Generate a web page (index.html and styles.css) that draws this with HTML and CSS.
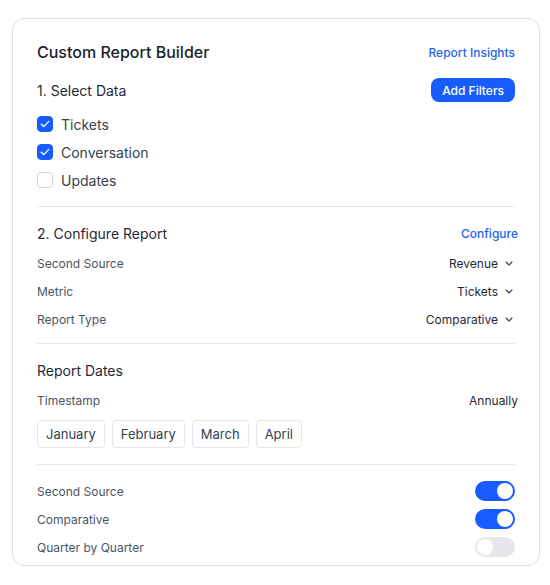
FILE: index.html
```html
<!DOCTYPE html>
<html lang="en">
<head>
<meta charset="utf-8">
<title>Custom Report Builder</title>
<link rel="stylesheet" href="styles.css">
</head>
<body>
<div class="card">
  <div class="row title-row">
    <h1 class="title">Custom Report Builder</h1>
    <a class="link">Report Insights</a>
  </div>

  <div class="row head">
    <h2 class="section-title">1. Select Data</h2>
    <button class="btn">Add Filters</button>
  </div>
  <div class="check-list">
    <label class="check-row"><span class="box checked"><svg width="10" height="8" viewBox="0 0 10 8"><path d="M1.2 4.2 L3.8 6.6 L8.8 1.4" fill="none" stroke="#fff" stroke-width="1.3" stroke-linecap="round" stroke-linejoin="round"/></svg></span>Tickets</label>
    <label class="check-row"><span class="box checked"><svg width="10" height="8" viewBox="0 0 10 8"><path d="M1.2 4.2 L3.8 6.6 L8.8 1.4" fill="none" stroke="#fff" stroke-width="1.3" stroke-linecap="round" stroke-linejoin="round"/></svg></span>Conversation</label>
    <label class="check-row"><span class="box"></span>Updates</label>
  </div>

  <div class="section s2">
    <div class="row head">
      <h2 class="section-title">2. Configure Report</h2>
      <a class="link link-over">Configure</a>
    </div>
    <div class="rows">
      <div class="row item"><span class="label">Second Source</span><span class="select">Revenue<svg class="chev" width="8" height="5" viewBox="0 0 8 5"><path d="M1 1 L4 4 L7 1" fill="none" stroke="#374151" stroke-width="1.1" stroke-linecap="round" stroke-linejoin="round"/></svg></span></div>
      <div class="row item"><span class="label">Metric</span><span class="select">Tickets<svg class="chev" width="8" height="5" viewBox="0 0 8 5"><path d="M1 1 L4 4 L7 1" fill="none" stroke="#374151" stroke-width="1.1" stroke-linecap="round" stroke-linejoin="round"/></svg></span></div>
      <div class="row item"><span class="label">Report Type</span><span class="select">Comparative<svg class="chev" width="8" height="5" viewBox="0 0 8 5"><path d="M1 1 L4 4 L7 1" fill="none" stroke="#374151" stroke-width="1.1" stroke-linecap="round" stroke-linejoin="round"/></svg></span></div>
    </div>
  </div>

  <div class="section s3">
    <div class="row head">
      <h2 class="section-title">Report Dates</h2>
    </div>
    <div class="row item ts"><span class="label">Timestamp</span><span class="value">Annually</span></div>
    <div class="months">
      <button class="month">January</button>
      <button class="month">February</button>
      <button class="month">March</button>
      <button class="month">April</button>
    </div>
  </div>

  <div class="section s4">
    <div class="row item"><span class="label">Second Source</span><span class="toggle on"><span class="knob"></span></span></div>
    <div class="row item"><span class="label">Comparative</span><span class="toggle on"><span class="knob"></span></span></div>
    <div class="row item"><span class="label">Quarter by Quarter</span><span class="toggle"><span class="knob"></span></span></div>
  </div>
</div>
</body>
</html>
```

FILE: styles.css
```css
* { box-sizing: border-box; }
html, body { margin: 0; padding: 0; background: #ffffff; }
body {
  font-family: Inter, "Noto Sans", "Liberation Sans", sans-serif;
  color: #1f2937;
  -webkit-font-smoothing: antialiased;
}
.card {
  width: 528px;
  margin: 18px 0 0 12px;
  border: 1px solid #dcdde0;
  border-radius: 12px;
  padding: 21px 24px 4px;
  background: #fff;
}
.row {
  display: flex;
  align-items: center;
  justify-content: space-between;
}
.title-row { height: 24px; }
.title {
  margin: 0;
  font-size: 16px;
  font-weight: 500;
  color: #1a1f2b;
}
.link {
  color: #2563eb;
  cursor: pointer;
  font-size: 12px;
  font-weight: 500;
}
.link-over { margin-right: -3px; }
.head { height: 24px; margin-top: 14px; }
.section-title {
  margin: 0;
  font-size: 14px;
  font-weight: 400;
  color: #1f2937;
}
.btn {
  height: 24px;
  padding: 0 11px;
  border: none;
  border-radius: 8px;
  background: #175cff;
  color: #fff;
  font-family: inherit;
  font-size: 12px;
  font-weight: 500;
}
.check-list { margin-top: 8px; }
.check-row {
  display: flex;
  align-items: center;
  height: 28px;
  font-size: 14px;
  color: #374151;
}
.box {
  width: 16px;
  height: 16px;
  border-radius: 4px;
  border: 1px solid #d1d5db;
  margin-right: 8px;
  display: flex;
  align-items: center;
  justify-content: center;
  background: #fff;
}
.box.checked { background: #175cff; border-color: #175cff; }
.section { border-top: 1px solid #e5e7eb; }
.s2 { margin-top: 12px; }
.rows { margin-top: 4px; }
.item { height: 28px; }
.label { font-size: 12px; color: #4b5563; }
.select {
  display: flex;
  align-items: center;
  font-size: 12px;
  color: #1f2937;
}
.chev { margin-left: 7px; margin-right: 2px; }
.value { font-size: 12px; color: #1f2937; margin-right: -3px; }
.s3 { margin-top: 10px; }
.ts { margin-top: 4px; }
.months {
  display: flex;
  gap: 7px;
  margin-top: 6px;
}
.month {
  height: 28px;
  padding: 0 8px;
  border: 1px solid #e5e7eb;
  border-radius: 4px;
  background: #fff;
  font-family: inherit;
  font-size: 13px;
  color: #374151;
}
.s4 { margin-top: 16px; padding-top: 12px; }
.toggle {
  width: 40px;
  height: 20px;
  border-radius: 10px;
  background: #e5e7eb;
  display: flex;
  align-items: center;
  padding: 2px;
}
.toggle .knob {
  width: 16px;
  height: 16px;
  border-radius: 50%;
  background: #fff;
}
.toggle.on { background: #175cff; justify-content: flex-end; }
```
